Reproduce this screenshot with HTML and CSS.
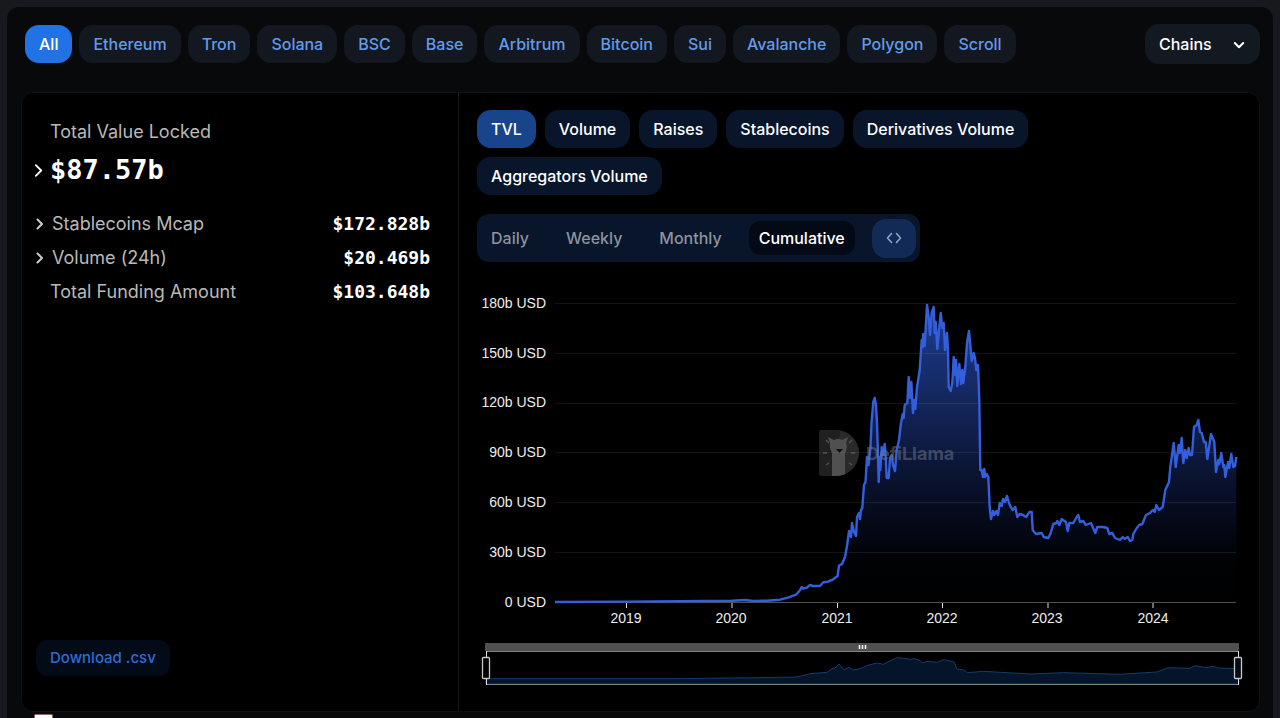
FILE: index.html
```html
<!DOCTYPE html>
<html lang="en">
<head>
<meta charset="utf-8">
<meta name="viewport" content="width=device-width, initial-scale=1">
<title>DefiLlama</title>
<link rel="stylesheet" href="styles.css">
</head>
<body>
<main class="panel">
  <header class="top">
    <nav class="chains" aria-label="Chains">
      <a class="chain active" href="#all">All</a>
      <a class="chain" href="#ethereum">Ethereum</a>
      <a class="chain" href="#tron">Tron</a>
      <a class="chain" href="#solana">Solana</a>
      <a class="chain" href="#bsc">BSC</a>
      <a class="chain" href="#base">Base</a>
      <a class="chain" href="#arbitrum">Arbitrum</a>
      <a class="chain" href="#bitcoin">Bitcoin</a>
      <a class="chain" href="#sui">Sui</a>
      <a class="chain" href="#avalanche">Avalanche</a>
      <a class="chain" href="#polygon">Polygon</a>
      <a class="chain" href="#scroll">Scroll</a>
    </nav>
    <div class="picker">
      <select class="picker-select" aria-label="Chains"><option>Chains</option></select>
      <svg class="picker-arrow" viewBox="0 0 12 12" aria-hidden="true"><path d="M1.800 4 6 8.200 10.200 4"/></svg>
    </div>
  </header>

  <section class="card">
    <div class="stats">
      <p class="label">Total Value Locked</p>
      <div class="total">
        <svg class="chev big" viewBox="0 0 10 16" aria-hidden="true"><path d="M2 2l6 6-6 6"/></svg>
        <strong class="total-value">$87.57b</strong>
      </div>
      <table class="rows">
        <tr><th scope="row"><span class="cell"><svg class="chev" viewBox="0 0 8 12" aria-hidden="true"><path d="M1.500 1.500 6 6l-4.500 4.500"/></svg>Stablecoins Mcap</span></th><td>$172.828b</td></tr>
        <tr><th scope="row"><span class="cell"><svg class="chev" viewBox="0 0 8 12" aria-hidden="true"><path d="M1.500 1.500 6 6l-4.500 4.500"/></svg>Volume (24h)</span></th><td>$20.469b</td></tr>
        <tr><th scope="row"><span class="cell plain">Total Funding Amount</span></th><td>$103.648b</td></tr>
      </table>
      <button class="download" type="button">Download .csv</button>
    </div>

    <div class="main">
      <div class="metrics">
        <button class="metric on" type="button">TVL</button>
        <button class="metric" type="button">Volume</button>
        <button class="metric" type="button">Raises</button>
        <button class="metric" type="button">Stablecoins</button>
        <button class="metric" type="button">Derivatives Volume</button>
        <button class="metric" type="button">Aggregators Volume</button>
      </div>
      <div class="periods">
        <button class="period" type="button">Daily</button>
        <button class="period" type="button">Weekly</button>
        <button class="period" type="button">Monthly</button>
        <button class="period on" type="button">Cumulative</button>
        <button class="embed" type="button" aria-label="Embed"><svg viewBox="0 0 16 12" aria-hidden="true"><path d="M5.500 1.500 1.500 6l4 4.500M10.500 1.500 14.500 6l-4 4.500"/></svg></button>
      </div>

      <svg class="chart" viewBox="477 280 764 412" role="img" aria-label="Total value locked">
        <defs>
          <linearGradient id="fill" gradientUnits="userSpaceOnUse" x1="0" y1="304" x2="0" y2="602">
            <stop offset="0" stop-color="#1f3c90"/>
            <stop offset="0.300" stop-color="#142861"/>
            <stop offset="0.600" stop-color="#09112c"/>
            <stop offset="0.860" stop-color="#010205"/>
            <stop offset="1" stop-color="#000000"/>
          </linearGradient>
          <clipPath id="logo-shape"><path d="M822 430h14a23 23 0 0 1 0 46h-14a3 3 0 0 1-3-3v-40a3 3 0 0 1 3-3z"/></clipPath>
          <path id="series" d="M555 602 626.500 601.600 732 600.700 745 600 753 601 767 600.700 780 599.700 788 597.700 796 594.700 800 590.300 801.700 587 803.300 588.700 806.700 587.700 810 585 813 586 820 586 823.300 582.300 828 581.700 833.300 579.300 837.600 576 839 565.500 842 564 845 557 847 546 849 531 851 537 852 523 854 532 856 536 857 517 859 513 860 519 861 510 862.300 508 864 485 865.500 482 867 457 868.500 465 870.500 447 871.500 423 873.300 402 874.700 398 876 405 877 423 878 457 878.700 482 879.700 457 880.300 470 881.700 447 883.500 455 884.700 444 885.700 457 886.700 478 888.700 478 890 458 891.700 455 893 465 895 471 896.700 450 899 440 901 423 902.700 414 903.700 418 904.700 405 907.300 403 908.700 377 909.700 398 911.300 382 913 413 914.300 400 915.300 409 917 387 919.700 370 921.700 340 922.700 347 923.300 334 924.700 346 926 323 927 305 928.700 317 930 335 931.700 313 933.700 307 934.700 333 935.700 322 937.300 349 939 330 940.700 313 942.300 328 943.700 323 945 350 947 333 948 350 948.700 387 950.700 391 952.300 383 953.700 357 955 375 956 360 957.300 386 959.300 364 961 384 962.300 370 963.300 383 965.300 367 967 343 969 331 970.300 345 971.700 361 973.700 353 975 358 976.300 370 978 365 979.300 400 980.300 470 981.700 470 983 477 984.300 469 985.300 477 986.700 474 988.300 477 989.700 507 991 519 993 511 994.300 515 996.300 511 998 515 999.700 503 1001.700 506 1003 499 1005 502 1007 496 1009 503 1010.700 507 1012.700 510 1015.300 507 1017.300 517 1019.700 514 1023 515 1026.300 517 1029.300 512 1031.700 512 1032.700 530 1036 534 1041.700 533 1043.700 537 1048.300 538 1050.700 533 1053.300 524 1056.300 523 1057.300 521 1059.300 525 1061.700 519 1066 522 1067.700 531 1069.300 523 1073.300 523 1076.700 517 1078.300 515 1080 522 1083.300 521 1085.700 525 1091 523 1095.300 533 1097.300 527 1103.300 527 1107.300 528 1109.300 534 1112.300 533 1115 538 1120 540 1122.700 537 1124.700 539 1127.700 537 1130 541 1132.300 540 1133.300 534 1136.700 528 1139.300 525 1142.300 524 1146 515 1150 513 1152.700 510 1154.700 512 1156.300 505 1159 510 1162.700 507 1165.300 490 1169 482 1170.300 467 1173.700 443 1175.700 467 1178.700 445 1180 453 1181.700 438 1183.300 463 1185.300 450 1186.700 458 1188.700 448 1190 455 1192 455 1194 427 1196.700 425 1198.300 420 1200 432 1201.700 433 1204 442 1205.700 442 1207.300 459 1211 434 1214.300 442 1216 472 1218.300 460 1219.300 464 1221.300 453 1223.300 467 1224.300 465 1225.300 477 1228 462 1229.300 468 1231.300 454 1233.300 467 1235 466 1236.300 457"/>
        </defs>
        <path id="area" fill="url(#fill)" d=""/>
        <path class="grid" d="M555 303.500h681M555 353.500h681M555 403.500h681M555 452.500h681M555 502.500h681M555 552.500h681"/>
        <path class="axis" d="M555 602.500h681"/>
        <path class="ticks" d="M626.500 603v5M732 603v5M837.500 603v5M942.500 603v5M1048 603v5M1153 603v5"/>
        <use class="line" href="#series"/>
        <g class="mark">
          <g clip-path="url(#logo-shape)">
            <rect x="818" y="429" width="42" height="48" fill="#555555"/>
            <path d="M818 429h23l-10 48h-13z" fill="#404040"/>
            <path d="M832 477v-24q-3-5-2-10l-2-6 6 3q4-2 8 0l6-3-2 6q2 5-1 10v24z" fill="#a0a0a0"/>
            <path d="M836 449h7l-3.500 4z" fill="#222222"/>
            <path d="M826 440l3 3M823 453h4M826 465l3-2M852 440l-3 3M855 453h-4M852 465l-3-2" stroke="#a0a0a0" stroke-width="1.500"/>
          </g>
          <text class="brand" x="866" y="460">DefiLlama</text>
        </g>
        <g class="ylab">
          <text x="546" y="308">180b USD</text>
          <text x="546" y="358">150b USD</text>
          <text x="546" y="407">120b USD</text>
          <text x="546" y="457">90b USD</text>
          <text x="546" y="507">60b USD</text>
          <text x="546" y="557">30b USD</text>
          <text x="546" y="607">0 USD</text>
        </g>
        <g class="xlab">
          <text x="626" y="623">2019</text>
          <text x="731" y="623">2020</text>
          <text x="837" y="623">2021</text>
          <text x="942" y="623">2022</text>
          <text x="1047" y="623">2023</text>
          <text x="1153" y="623">2024</text>
        </g>
        <g>
          <path d="M486 684V678.700H673L760 677.700 797 677 810 673.700 827 672.300 832 668.700 835 668 839 664 844 669.700 849 667.300 853 670 860 668.700 866.700 665.700 876.700 663 883.300 664.300 896.700 657.700 905 658.300 910 659.500 914 658.700 920 660.300 922 663 927.700 661.300 936.700 662.300 944 659.700 954.300 662 956.700 669 964 670 967.300 672.700 983.300 671.300 1030 674 1063.300 672.700 1120 674.300 1156.700 672 1168.300 667.700 1190 668.300 1195 665.700 1206 667.700 1213 666.300 1218.300 668 1238.500 668.700V684z" fill="#04152a" stroke="#173a70"/>
          <rect x="485" y="643" width="754" height="8" rx="1" fill="#505050"/>
          <path d="M486 651.500h753M486 684.500h753" stroke="#7d8085" fill="none"/>
          <path d="M486.500 651v34M1238.500 651v34" stroke="#dddddd" fill="none"/>
          <rect x="482.500" y="657.500" width="7" height="21" rx="1" fill="#000000" stroke="#c8c8c8" stroke-width="1.300"/>
          <rect x="1234.500" y="657.500" width="7" height="21" rx="1" fill="#050b14" stroke="#c8c8c8" stroke-width="1.300"/>
          <path d="M859.500 645v4M862.500 645v4M865.500 645v4" stroke="#ffffff" stroke-width="1.500"/>
        </g>
      </svg>
    </div>
  </section>
  <div class="peek" aria-hidden="true"><span class="peek-tile"></span></div>
</main>
<script src="chart.js"></script>
</body>
</html>
```
FILE: styles.css
```css
* { box-sizing: border-box; }
body {
  margin: 0;
  padding: 7px 7px 0;
  min-height: 100vh;
  display: flex;
  background: #18191e;
  color: #fff;
  font: 500 16px/22px Inter, "Liberation Sans", sans-serif;
  overflow-x: hidden;
}
button, select { font: inherit; color: inherit; border: 0; cursor: pointer; }
.panel {
  flex: 1;
  min-width: 0;
  display: flex;
  flex-direction: column;
  padding: 17px 13px 0 14px;
  background: #08090b;
  border-radius: 12px 12px 0 0;
}
.top {
  display: flex;
  align-items: center;
  justify-content: space-between;
  margin-bottom: 28px;
  padding-left: 4px;
}
.chains { display: flex; gap: 7px; }
.chain {
  padding: 8px 14px;
  border-radius: 14px;
  background: #131820;
  color: #629bea;
  text-decoration: none;
  white-space: nowrap;
}
.chain.active { background: #2172e5; color: #fff; }
.picker { position: relative; }
.picker-select {
  appearance: none;
  width: 115px;
  height: 40px;
  padding: 0 14px;
  border-radius: 14px;
  background: #131921;
}
.picker-arrow {
  position: absolute;
  right: 15px;
  top: 15px;
  width: 12px;
  height: 12px;
  fill: none;
  stroke: #fff;
  stroke-width: 2;
  stroke-linecap: round;
  stroke-linejoin: round;
  pointer-events: none;
}
.card {
  flex: 1;
  display: grid;
  grid-template-columns: 437px minmax(0, 1fr);
  background: #000;
  border: 1px solid #101113;
  border-radius: 12px;
}
.stats {
  display: flex;
  flex-direction: column;
  padding: 28px 28px 35px 14px;
  border-right: 1px solid #17181a;
}
.label {
  margin: 0 0 0 14px;
  font-size: 18px;
  font-weight: 400;
  color: #b9b9b9;
}
.total { display: flex; align-items: center; gap: 7px; margin: 11px 0 21px -2px; }
.total-value { font: 700 27px/32px "DejaVu Sans Mono", monospace; }
.chev { width: 8px; height: 12px; fill: none; stroke: #ccc; stroke-width: 2; stroke-linecap: round; stroke-linejoin: round; }
.chev.big { width: 9px; height: 15px; stroke: #fff; }
.rows { width: 100%; border-collapse: collapse; }
.rows th { padding: 0; font-size: 18px; font-weight: 400; text-align: left; color: #b9b9b9; }
.rows td { padding: 0; height: 34px; text-align: right; font: 700 18px/22px "DejaVu Sans Mono", monospace; }
.cell { display: flex; align-items: center; gap: 8px; }
.cell.plain { padding-left: 14px; }
.download {
  margin-top: auto;
  align-self: flex-start;
  height: 36px;
  padding: 0 14px;
  border-radius: 12px;
  background: #030b18;
  color: #2b6dd2;
  font-size: 15px;
}
.main { padding: 17px 18px 19px 18px; }
.metrics { display: flex; flex-wrap: wrap; gap: 9px; padding-right: 120px; }
.metric {
  height: 38px;
  padding: 0 14px;
  border-radius: 14px;
  background: #08152a;
}
.metric.on { background: #17448b; }
.periods {
  display: inline-flex;
  align-items: center;
  gap: 17px;
  height: 48px;
  margin-top: 19px;
  padding: 0 4px;
  border-radius: 12px;
  background: #08152a;
  vertical-align: top;
}
.period {
  height: 34px;
  padding: 0 10px;
  border-radius: 12px;
  background: none;
  color: #8d939e;
}
.period.on { background: #030915; color: #fff; }
.embed {
  display: grid;
  place-items: center;
  width: 44px;
  height: 39px;
  border-radius: 14px;
  background: #112a56;
}
.embed svg { width: 16px; height: 12px; fill: none; stroke: #9ba8bf; stroke-width: 1.5; stroke-linecap: round; stroke-linejoin: round; }
.chart { display: block; width: 100%; height: auto; margin-top: 18px; overflow: visible; }
.grid { fill: none; stroke: #fff; stroke-opacity: .08; }
.axis { fill: none; stroke: #505050; }
.ticks { fill: none; stroke: #ddd; }
.line { fill: none; stroke: #345fdc; stroke-width: 2.4; stroke-linejoin: round; }
.mark { opacity: .5; }
.brand { font: 700 18px Inter, sans-serif; fill: #6f7788; }
.ylab, .xlab { font: 400 14px "Liberation Sans", sans-serif; fill: #eee; }
.ylab { text-anchor: end; }
.xlab { text-anchor: middle; }
.peek { height: 6px; padding: 2px 0 0 13px; }
.peek-tile { display: block; width: 19px; height: 4px; border-radius: 2px 2px 0 0; border: 1px solid #8f6a5f; border-bottom: 0; background: #fff; }
```
FILE: chart.js
```js
const series = document.getElementById("series").getAttribute("d");
document.getElementById("area").setAttribute("d", series + "V602H555z");
```
